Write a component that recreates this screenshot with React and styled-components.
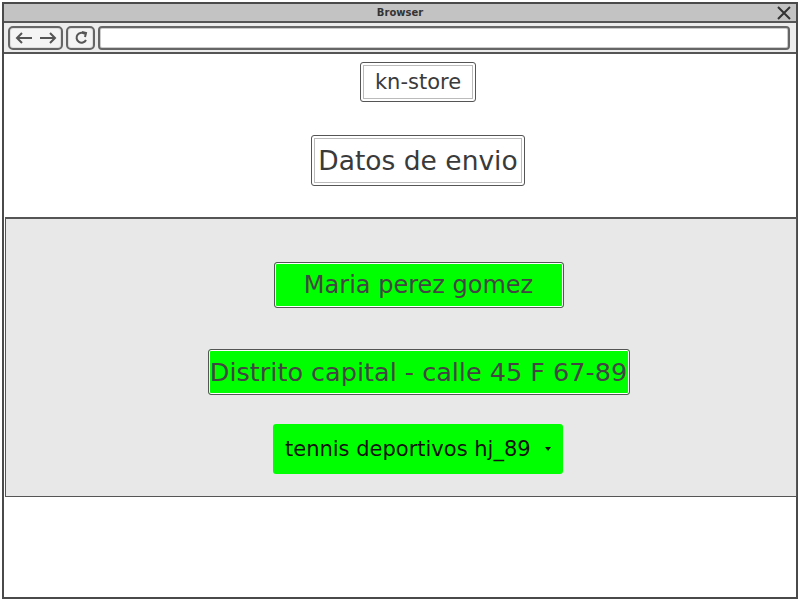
import React from 'react';
import styled, { createGlobalStyle } from 'styled-components';

const GlobalStyle = createGlobalStyle`
  html, body {
    margin: 0;
    padding: 0;
    background: #ffffff;
  }
  body {
    font-family: "Comic Sans MS", "DejaVu Sans", sans-serif;
  }
`;

const Window = styled.div`
  box-sizing: border-box;
  margin: 2px;
  width: 796px;
  height: 597px;
  border: 2px solid #4a4a4a;
  display: flex;
  flex-direction: column;
  background: #fff;
`;

const TitleBar = styled.div`
  position: relative;
  height: 17px;
  background: #c3c3c3;
  border-bottom: 2px solid #555;
  display: flex;
  align-items: center;
  justify-content: center;
  font-family: "DejaVu Sans", sans-serif;
  font-size: 10px;
  font-weight: bold;
  color: #333;
`;

const CloseIcon = styled.svg`
  position: absolute;
  right: 5px;
  top: 2px;
`;

const Toolbar = styled.div`
  height: 29px;
  background: #ececec;
  border-bottom: 2px solid #555;
  display: flex;
  align-items: center;
  gap: 3px;
  padding: 0 6px 0 4px;
`;

const NavButton = styled.div`
  box-sizing: border-box;
  width: ${p => p.w}px;
  height: 24px;
  border: 2px solid #666;
  border-radius: 5px;
  background: #f4f4f4;
  box-shadow: inset 0 0 0 1px #ddd;
  display: flex;
  align-items: center;
  justify-content: center;
  gap: 4px;
`;

const AddressBar = styled.div`
  flex: 1;
  box-sizing: border-box;
  height: 24px;
  border: 2px solid #666;
  border-radius: 4px;
  background: #fff;
  box-shadow: inset 0 0 0 1px #ccc;
`;

const Content = styled.div`
  flex: 1;
  display: flex;
  flex-direction: column;
  padding-top: 8px;
`;

const Header = styled.div`
  display: flex;
  flex-direction: column;
  align-items: center;
  padding-left: 36px;
`;

const Label = styled.div`
  box-sizing: border-box;
  width: ${p => p.w}px;
  height: ${p => p.h}px;
  border: 1px solid #555;
  border-radius: 3px;
  box-shadow: inset 0 0 0 2px #fff, inset 0 0 0 3px #bbb;
  display: flex;
  align-items: center;
  justify-content: center;
  font-size: ${p => p.size}px;
  color: #3a3a3a;
  white-space: nowrap;
  margin-bottom: ${p => p.mb}px;
`;

const Panel = styled.div`
  box-sizing: border-box;
  margin: 0 -1px 0 1px;
  height: 280px;
  background: #e8e8e8;
  border: 1px solid #555;
  border-top-width: 2px;
  display: flex;
  flex-direction: column;
  align-items: center;
  padding: 43px 0 0 35px;
`;

const GreenField = styled.div`
  box-sizing: border-box;
  width: ${p => p.w}px;
  height: 46px;
  background: #00ff00;
  border: 1.5px solid #555;
  border-radius: 3px;
  box-shadow: inset 0 0 0 1px #fff;
  display: flex;
  align-items: center;
  justify-content: center;
  font-size: ${p => p.size}px;
  color: #444;
  white-space: nowrap;
  margin-bottom: ${p => p.mb}px;
`;

const Select = styled.div`
  box-sizing: border-box;
  width: 290px;
  height: 50px;
  margin-left: -1px;
  background: #00ff00;
  border-radius: 3px;
  display: flex;
  align-items: center;
  padding: 0 11px 0 12px;
  font-size: 21px;
  color: #111;
  white-space: nowrap;
`;

const SelectText = styled.span`
  flex: 1;
`;

export default function App() {
  return (
    <>
      <GlobalStyle />
      <Window>
        <TitleBar>
          Browser
          <CloseIcon width="14" height="14" viewBox="0 0 14 14">
            <path d="M1 1 L13 13 M13 1 L1 13" stroke="#333" strokeWidth="2" />
          </CloseIcon>
        </TitleBar>
        <Toolbar>
          <NavButton w={55}>
            <svg width="20" height="14" viewBox="0 0 20 14">
              <path d="M18 7 H3 M8 2 L3 7 L8 12" stroke="#555" strokeWidth="2" fill="none" />
            </svg>
            <svg width="20" height="14" viewBox="0 0 20 14">
              <path d="M2 7 H17 M12 2 L17 7 L12 12" stroke="#555" strokeWidth="2" fill="none" />
            </svg>
          </NavButton>
          <NavButton w={29}>
            <svg width="14" height="16" viewBox="0 0 14 16">
              <path d="M11 4 A5 5 0 1 0 12 10" stroke="#555" strokeWidth="2" fill="none" />
              <path d="M8 2 L12 3 L11 7" stroke="#555" strokeWidth="2" fill="none" />
            </svg>
          </NavButton>
          <AddressBar />
        </Toolbar>
        <Content>
          <Header>
            <Label w={116} h={40} size={21} mb={33}>kn-store</Label>
            <Label w={214} h={51} size={26.5} mb={31}>Datos de envio</Label>
          </Header>
          <Panel>
            <GreenField w={290} size={24} mb={41}>Maria perez gomez</GreenField>
            <GreenField w={422} size={25.5} mb={29}>Distrito capital - calle 45 F 67-89</GreenField>
            <Select>
              <SelectText>tennis deportivos hj_89</SelectText>
              <svg width="8" height="6" viewBox="0 0 8 6">
                <path d="M1 1 L7 1 L4 5 Z" fill="#111" />
              </svg>
            </Select>
          </Panel>
        </Content>
      </Window>
    </>
  );
}
